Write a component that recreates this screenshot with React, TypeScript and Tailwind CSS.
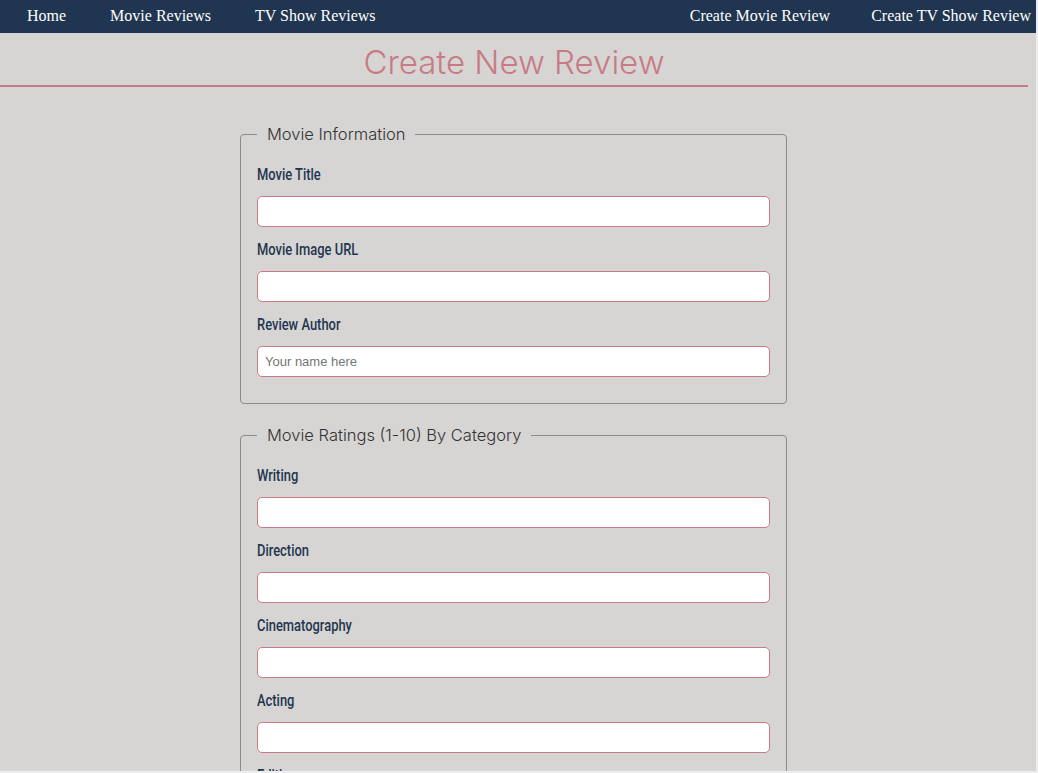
import React from 'react';

const navFont = { fontFamily: '"Liberation Serif", "Times New Roman", serif' };

function Field({ label, placeholder }: { label: string; placeholder?: string }) {
  return (
    <div className="mb-[10px]">
      <label className="block h-[24px] leading-[24px] mb-[10px] text-[#1f3550] [font-family:Roboto,sans-serif]">
        <span className="inline-block origin-left scale-x-[0.76] text-[17px] font-medium whitespace-nowrap">{label}</span>
      </label>
      <input
        type="text"
        placeholder={placeholder}
        className="block w-full h-[31px] px-[7px] bg-white border border-[#c97b85] rounded-[5px] text-[13px] text-[#222] placeholder:text-[#757575] outline-none [font-family:'Liberation_Sans',Arial,sans-serif]"
      />
    </div>
  );
}

function Section({ title, fields }: { title: string; fields: { label: string; placeholder?: string }[] }) {
  return (
    <fieldset className="w-[547px] ml-[240px] border border-[#8c8c8c] rounded-[4px] px-4 pt-4 pb-[16px] mb-[19px]">
      <legend className="px-[10px] h-[24px] leading-[24px] text-[16.5px] font-light text-[#333] [font-family:Inter,sans-serif]">
        {title}
      </legend>
      {fields.map((f) => (
        <Field key={f.label} label={f.label} placeholder={f.placeholder} />
      ))}
    </fieldset>
  );
}

export default function App() {
  return (
    <div className="w-full h-[773px] bg-[#ededed] overflow-hidden">
      <div className="w-[1036px] h-[771px] bg-[#d6d5d3] overflow-hidden">
        <nav className="h-[33px] bg-[#20354f] flex items-center justify-between text-white text-[16px]" style={navFont}>
          <div className="flex items-center gap-[44px] pl-[27px] -mt-[1px]">
            <a>Home</a>
            <a>Movie Reviews</a>
            <a>TV Show Reviews</a>
          </div>
          <div className="flex items-center gap-[41px] pr-[5px] -mt-[1px]">
            <a>Create Movie Review</a>
            <a>Create TV Show Review</a>
          </div>
        </nav>
        <h1 className="mr-[8px] h-[54px] pt-[6px] leading-[46px] text-center text-[33px] font-light text-[#c97b85] border-b-2 border-[#c97b85] [font-family:Inter,sans-serif]">
          Create New Review
        </h1>
        <div className="pt-[35px]">
          <Section
            title="Movie Information"
            fields={[
              { label: 'Movie Title' },
              { label: 'Movie Image URL' },
              { label: 'Review Author', placeholder: 'Your name here' },
            ]}
          />
          <Section
            title="Movie Ratings (1-10) By Category"
            fields={[
              { label: 'Writing' },
              { label: 'Direction' },
              { label: 'Cinematography' },
              { label: 'Acting' },
              { label: 'Editing' },
              { label: 'Soundtrack' },
            ]}
          />
        </div>
      </div>
    </div>
  );
}
